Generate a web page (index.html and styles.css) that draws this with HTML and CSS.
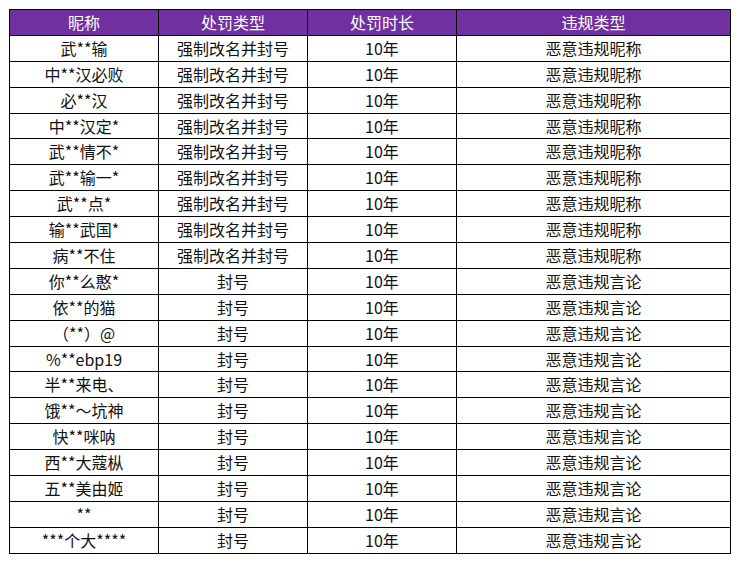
FILE: index.html
```html
<!DOCTYPE html>
<html lang="zh-CN">
<head>
<meta charset="utf-8">
<link rel="stylesheet" href="styles.css">
</head>
<body>
<table class="penalty">
<colgroup><col class="c1"><col class="c2"><col class="c3"><col class="c4"></colgroup>
<thead>
<tr><th>昵称</th><th>处罚类型</th><th>处罚时长</th><th>违规类型</th></tr>
</thead>
<tbody>
<tr><td>武**输</td><td>强制改名并封号</td><td>10年</td><td>恶意违规昵称</td></tr>
<tr><td>中**汉必败</td><td>强制改名并封号</td><td>10年</td><td>恶意违规昵称</td></tr>
<tr><td>必**汉</td><td>强制改名并封号</td><td>10年</td><td>恶意违规昵称</td></tr>
<tr><td>中**汉定*</td><td>强制改名并封号</td><td>10年</td><td>恶意违规昵称</td></tr>
<tr><td>武**情不*</td><td>强制改名并封号</td><td>10年</td><td>恶意违规昵称</td></tr>
<tr><td>武**输一*</td><td>强制改名并封号</td><td>10年</td><td>恶意违规昵称</td></tr>
<tr><td>武**点*</td><td>强制改名并封号</td><td>10年</td><td>恶意违规昵称</td></tr>
<tr><td>输**武国*</td><td>强制改名并封号</td><td>10年</td><td>恶意违规昵称</td></tr>
<tr><td>病**不住</td><td>强制改名并封号</td><td>10年</td><td>恶意违规昵称</td></tr>
<tr><td>你**么憨*</td><td>封号</td><td>10年</td><td>恶意违规言论</td></tr>
<tr><td>依**的猫</td><td>封号</td><td>10年</td><td>恶意违规言论</td></tr>
<tr><td>（**）@</td><td>封号</td><td>10年</td><td>恶意违规言论</td></tr>
<tr><td>%**ebp19</td><td>封号</td><td>10年</td><td>恶意违规言论</td></tr>
<tr><td>半**来电、</td><td>封号</td><td>10年</td><td>恶意违规言论</td></tr>
<tr><td>饿**～坑神</td><td>封号</td><td>10年</td><td>恶意违规言论</td></tr>
<tr><td>快**咪呐</td><td>封号</td><td>10年</td><td>恶意违规言论</td></tr>
<tr><td>西**大蔻枞</td><td>封号</td><td>10年</td><td>恶意违规言论</td></tr>
<tr><td>五**美由姬</td><td>封号</td><td>10年</td><td>恶意违规言论</td></tr>
<tr><td>**</td><td>封号</td><td>10年</td><td>恶意违规言论</td></tr>
<tr><td>***个大****</td><td>封号</td><td>10年</td><td>恶意违规言论</td></tr>
</tbody>
</table>
</body>
</html>
```
FILE: styles.css
```css
html, body {
  margin: 0;
  padding: 0;
  background: #ffffff;
}
body {
  padding: 9px 0 0 9px;
  font-family: "Noto Sans CJK SC", "Noto Sans", sans-serif;
  font-size: 16px;
  color: #111111;
}
.penalty {
  border-collapse: collapse;
  table-layout: fixed;
  width: 721px;
}
.c1, .c2, .c3 { width: 149px; }
.c4 { width: 274px; }
.penalty tr {
  height: 25.9px;
}
.penalty th,
.penalty td {
  border: 1px solid #000000;
  padding: 0 0 1px 0;
  text-align: center;
  vertical-align: middle;
  line-height: 18px;
  white-space: nowrap;
  overflow: hidden;
}
.penalty th {
  background: #7030a0;
  color: #ffffff;
  font-weight: normal;
}
```
